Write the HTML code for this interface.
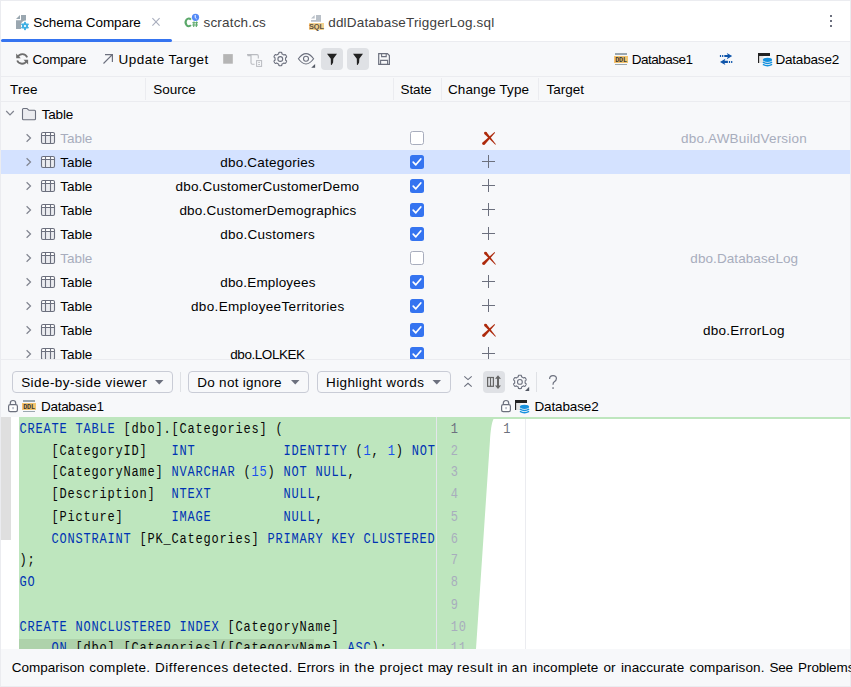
<!DOCTYPE html>
<html><head><meta charset="utf-8">
<style>
*{margin:0;padding:0;box-sizing:border-box}
html,body{width:851px;height:687px;overflow:hidden}
body{position:relative;background:#f7f8fa;font-family:"Liberation Sans",sans-serif;font-size:13.5px;color:#000}
.a{position:absolute}
.t{position:absolute;white-space:nowrap;line-height:16px;height:16px}
svg{position:absolute;overflow:visible}
.code{position:absolute;font-family:"Liberation Mono",monospace;font-size:12px;letter-spacing:0.8px;white-space:pre;line-height:17.742px;color:#080808;transform:scaleY(1.24);transform-origin:0 0}
.k{color:#0033b3}
.n{color:#1750eb}
.ln{position:absolute;font-family:"Liberation Mono",monospace;font-size:12px;letter-spacing:0.8px;line-height:17.742px;color:#a8adbd;white-space:pre;transform:scaleY(1.24);transform-origin:0 0}
.dd{position:absolute;top:371px;height:22px;border:1px solid #c9ccd6;border-radius:4px}
</style></head><body>

<div class="a" style="left:0px;top:0px;width:851px;height:1px;background:#ebecf0"></div>
<div class="a" style="left:0px;top:0px;width:1px;height:687px;background:#ebecf0"></div>
<div class="a" style="left:850px;top:0px;width:1px;height:687px;background:#ebecf0"></div>
<div class="a" style="left:0px;top:686px;width:851px;height:1px;background:#ebecf0"></div>
<div class="a" style="left:1px;top:1px;width:849px;height:40px;background:#fff"></div>
<div class="a" style="left:1px;top:41px;width:849px;height:1px;background:#ebecf0"></div>
<div class="a" style="left:1px;top:39px;width:171px;height:3px;background:#3574f0;border-radius:1.5px"></div>
<div class="t" style="left:33.30px;top:14.82px;letter-spacing:-0.100px">Schema Compare</div>
<div class="t" style="left:203.50px;top:14.82px;letter-spacing:0.178px;color:#404040">scratch.cs</div>
<div class="t" style="left:328.20px;top:14.82px;letter-spacing:0.183px;color:#404040">ddlDatabaseTriggerLog.sql</div>
<svg style="left:0;top:0" width="851" height="687"><path d="M16,19 L20,15 L20,19 Z" fill="#9aa7b0"/><path d="M21,15 L26,15 L26,20.5 A5,5 0 0 0 21,24 L21,29 L16,29 L16,20.3 L21,20.3 Z" fill="#9aa7b0"/></svg>
<svg style="left:0;top:0" width="851" height="687"><path d="M25.00,21.85 L25.22,21.86 L25.43,21.87 L25.65,21.90 L25.84,22.05 L25.93,22.55 L25.96,23.04 L26.08,23.20 L26.22,23.26 L26.36,23.33 L26.50,23.40 L26.63,23.48 L26.76,23.57 L26.89,23.67 L27.08,23.69 L27.53,23.47 L28.00,23.30 L28.23,23.39 L28.36,23.56 L28.48,23.74 L28.59,23.93 L28.70,24.12 L28.79,24.31 L28.87,24.51 L28.84,24.75 L28.45,25.07 L28.04,25.35 L27.96,25.53 L27.98,25.69 L28.00,25.84 L28.00,26.00 L28.00,26.16 L27.98,26.31 L27.96,26.47 L28.04,26.65 L28.45,26.93 L28.84,27.25 L28.87,27.49 L28.79,27.69 L28.70,27.88 L28.59,28.07 L28.48,28.26 L28.36,28.44 L28.23,28.61 L28.00,28.70 L27.53,28.53 L27.08,28.31 L26.89,28.33 L26.76,28.43 L26.63,28.52 L26.50,28.60 L26.36,28.67 L26.22,28.74 L26.08,28.80 L25.96,28.96 L25.93,29.45 L25.84,29.95 L25.65,30.10 L25.43,30.13 L25.22,30.14 L25.00,30.15 L24.78,30.14 L24.57,30.13 L24.35,30.10 L24.16,29.95 L24.07,29.45 L24.04,28.96 L23.92,28.80 L23.78,28.74 L23.64,28.67 L23.50,28.60 L23.37,28.52 L23.24,28.43 L23.11,28.33 L22.92,28.31 L22.47,28.53 L22.00,28.70 L21.77,28.61 L21.64,28.44 L21.52,28.26 L21.41,28.08 L21.30,27.88 L21.21,27.69 L21.13,27.49 L21.16,27.25 L21.55,26.93 L21.96,26.65 L22.04,26.47 L22.02,26.31 L22.00,26.16 L22.00,26.00 L22.00,25.84 L22.02,25.69 L22.04,25.53 L21.96,25.35 L21.55,25.07 L21.16,24.75 L21.13,24.51 L21.21,24.31 L21.30,24.12 L21.41,23.93 L21.52,23.74 L21.64,23.56 L21.77,23.39 L22.00,23.30 L22.47,23.47 L22.92,23.69 L23.11,23.67 L23.24,23.57 L23.37,23.48 L23.50,23.40 L23.64,23.33 L23.78,23.26 L23.92,23.20 L24.04,23.04 L24.07,22.55 L24.16,22.05 L24.35,21.90 L24.57,21.87 L24.78,21.86 L25.00,21.85Z M26.1,26 A1.1,1.1 0 1 0 23.9,26 A1.1,1.1 0 1 0 26.1,26Z" fill="#3fb0e4" fill-rule="evenodd"/></svg>
<svg style="left:0;top:0" width="851" height="687"><path d="M190.9,19.6 A3.1,3.9 0 1 0 190.9,25.2" fill="none" stroke="#5ba86a" stroke-width="2"/><path d="M194,21.5 L193.7,27 M196.6,21.5 L196.3,27 M192.3,22.8 L198,22.8 M192.3,25 L198,25" stroke="#5ba86a" stroke-width="1.1"/><circle cx="195.5" cy="17.3" r="3.6" fill="#548af7"/><path d="M195.2,15 L195.2,17.6 L196.6,18.9" fill="none" stroke="#fff" stroke-width="1"/></svg>
<svg style="left:0;top:0" width="851" height="687"><path d="M311,18.5 L314.7,15 L314.7,18.5 Z" fill="#b9c0c8"/><path d="M316,15 L321,15 L321,21.7 L311,21.7 L311,20 L316,20 Z" fill="#b9c0c8"/><rect x="309" y="23" width="15" height="7" fill="#f4d28f"/><text x="316.5" y="29.2" font-family="Liberation Sans" font-weight="bold" font-size="7.4" fill="#5a5040" text-anchor="middle">SQL</text></svg>
<svg style="left:0;top:0" width="851" height="687"><rect x="830" y="15" width="2" height="2" fill="#6c707e"/><rect x="830" y="20" width="2" height="2" fill="#6c707e"/><rect x="830" y="25" width="2" height="2" fill="#6c707e"/></svg>
<svg style="left:0;top:0" width="851" height="687"><path d="M152.4,18.2 L159.6,25.6 M159.6,18.2 L152.4,25.6" stroke="#a8adbd" stroke-width="1.1"/></svg>
<div class="a" style="left:1px;top:76px;width:849px;height:1px;background:#ebecf0"></div>
<div class="t" style="left:32.60px;top:51.82px;letter-spacing:-0.250px">Compare</div>
<div class="t" style="left:118.60px;top:51.82px;letter-spacing:0.425px">Update Target</div>
<div class="a" style="left:321px;top:48px;width:22px;height:22px;background:#dfe1e5;border-radius:4px"></div>
<div class="a" style="left:347px;top:48px;width:22px;height:22px;background:#dfe1e5;border-radius:4px"></div>
<div class="t" style="left:631.80px;top:51.82px;letter-spacing:-0.512px">Database1</div>
<div class="t" style="left:775.40px;top:51.82px;letter-spacing:-0.175px">Database2</div>
<svg style="left:0;top:0" width="851" height="687"><path d="M17.6,57.2 A5.2,5.2 0 0 1 27.2,57.3" fill="none" stroke="#6e6e6e" stroke-width="1.8"/><path d="M16.2,53.4 L16.2,58.2 L20.8,58.2 Z" fill="#6e6e6e"/><path d="M26.8,60.6 A5.2,5.2 0 0 1 17.2,60.5" fill="none" stroke="#6e6e6e" stroke-width="1.8"/><path d="M28.1,64.6 L28.1,59.8 L23.5,59.8 Z" fill="#6e6e6e"/><path d="M103.5,63.5 L112.3,54.7 M105,54.6 L112.4,54.6 L112.4,62" fill="none" stroke="#6c707e" stroke-width="1.2"/><rect x="223.2" y="54.1" width="9.6" height="9.6" fill="#b5b5b5"/><path d="M247.6,55.6 L247.6,54.6 L257,54.6 Q258.3,54.6 258.3,56 L258.3,58.5 M251,54.6 L251,62.8 Q251,64.2 252.4,64.2 L254.6,64.2 M247.6,55.6 L251,55.6" fill="none" stroke="#b9bbc0" stroke-width="1.1"/><rect x="256.6" y="60.6" width="5" height="5.8" fill="none" stroke="#b9bbc0" stroke-width="1"/><path d="M258.2,62.4 L260,62.4 M258.2,64.5 L260,64.5" stroke="#b9bbc0" stroke-width="0.9"/><path d="M298.4,58.8 Q306,48.4 313.6,58.8 Q306,69.2 298.4,58.8 Z" fill="none" stroke="#6c707e" stroke-width="1.1"/><circle cx="306" cy="58.8" r="2.5" fill="none" stroke="#6c707e" stroke-width="1.1"/><path d="M311.2,67.7 L315.1,63.9 L315.1,67.7 Z" fill="#555a66"/><path d="M327,53.8 L337,53.8 L333.3,58.8 L333.1,62.4 L331.7,65.1 L330.9,64.8 L330.8,58.8 Z" fill="#222"/><path d="M353,53.8 L363,53.8 L359.3,58.8 L359.1,62.4 L357.7,65.1 L356.9,64.8 L356.8,58.8 Z" fill="#222"/><path d="M378.7,53.6 L387.4,53.6 L389.4,55.6 L389.4,64.4 L378.7,64.4 Z" fill="none" stroke="#6c707e" stroke-width="1.2"/><path d="M381.6,53.6 L381.6,56.6 L386.2,56.6 L386.2,53.6" fill="none" stroke="#6c707e" stroke-width="1.1"/><path d="M380.6,64.4 L380.6,60.4 L387.6,60.4 L387.6,64.4" fill="none" stroke="#6c707e" stroke-width="1.1"/><path d="M719.9,55.1 h1.2 v2 h-1.2 Z M722.1,55.1 h1.2 v2 h-1.2 Z M724.3,55 L729,55 L729,57.1 L724.3,57.1 Z M726.8,52.9 L732.2,56 L726.8,59.2 L728.2,56 Z" fill="#0d54aa"/><path d="M732.3,60.9 h-1.2 v2 h1.2 Z M730.1,60.9 h-1.2 v2 h1.2 Z M727.9,60.8 L723.2,60.8 L723.2,62.9 L727.9,62.9 Z M725.4,58.7 L720,61.9 L725.4,65.1 L724,61.9 Z" fill="#0d54aa"/></svg>
<svg style="left:0;top:0" width="851" height="687"><path d="M280.30,52.30 L280.48,52.30 L280.65,52.31 L280.83,52.32 L281.00,52.34 L281.17,52.36 L281.35,52.38 L281.52,52.41 L281.69,52.46 L281.80,52.74 L281.85,53.20 L281.88,53.67 L281.94,53.95 L282.07,54.00 L282.20,54.05 L282.33,54.10 L282.46,54.16 L282.58,54.22 L282.71,54.28 L282.83,54.34 L282.95,54.41 L283.07,54.48 L283.19,54.56 L283.30,54.63 L283.42,54.71 L283.53,54.80 L283.64,54.88 L283.74,54.97 L283.86,55.05 L284.13,54.97 L284.54,54.76 L284.97,54.57 L285.27,54.53 L285.39,54.65 L285.51,54.78 L285.62,54.92 L285.72,55.06 L285.82,55.21 L285.92,55.35 L286.01,55.50 L286.10,55.65 L286.19,55.80 L286.27,55.96 L286.35,56.12 L286.42,56.27 L286.49,56.44 L286.55,56.60 L286.62,56.76 L286.66,56.93 L286.47,57.17 L286.10,57.45 L285.71,57.70 L285.50,57.90 L285.51,58.03 L285.53,58.17 L285.55,58.31 L285.57,58.45 L285.58,58.58 L285.59,58.72 L285.60,58.86 L285.60,59.00 L285.60,59.14 L285.59,59.28 L285.58,59.42 L285.57,59.55 L285.55,59.69 L285.53,59.83 L285.51,59.97 L285.50,60.10 L285.71,60.30 L286.10,60.55 L286.47,60.83 L286.66,61.07 L286.62,61.24 L286.55,61.40 L286.49,61.56 L286.42,61.73 L286.35,61.88 L286.27,62.04 L286.19,62.20 L286.10,62.35 L286.01,62.50 L285.92,62.65 L285.82,62.79 L285.72,62.94 L285.62,63.08 L285.51,63.22 L285.39,63.35 L285.27,63.47 L284.97,63.43 L284.54,63.24 L284.13,63.03 L283.86,62.95 L283.74,63.03 L283.64,63.12 L283.53,63.20 L283.42,63.29 L283.30,63.37 L283.19,63.44 L283.07,63.52 L282.95,63.59 L282.83,63.66 L282.71,63.72 L282.58,63.78 L282.46,63.84 L282.33,63.90 L282.20,63.95 L282.07,64.00 L281.94,64.05 L281.88,64.33 L281.85,64.80 L281.80,65.26 L281.69,65.54 L281.52,65.59 L281.35,65.62 L281.17,65.64 L281.00,65.66 L280.83,65.68 L280.65,65.69 L280.48,65.70 L280.30,65.70 L280.12,65.70 L279.95,65.69 L279.77,65.68 L279.60,65.66 L279.43,65.64 L279.25,65.62 L279.08,65.59 L278.91,65.54 L278.80,65.26 L278.75,64.80 L278.72,64.33 L278.66,64.05 L278.53,64.00 L278.40,63.95 L278.27,63.90 L278.14,63.84 L278.02,63.78 L277.89,63.72 L277.77,63.66 L277.65,63.59 L277.53,63.52 L277.41,63.44 L277.30,63.37 L277.18,63.29 L277.07,63.20 L276.96,63.12 L276.86,63.03 L276.74,62.95 L276.47,63.03 L276.06,63.24 L275.63,63.43 L275.33,63.47 L275.21,63.35 L275.09,63.22 L274.98,63.08 L274.88,62.94 L274.78,62.79 L274.68,62.65 L274.59,62.50 L274.50,62.35 L274.41,62.20 L274.33,62.04 L274.25,61.88 L274.18,61.73 L274.11,61.56 L274.05,61.40 L273.98,61.24 L273.94,61.07 L274.13,60.83 L274.50,60.55 L274.89,60.30 L275.10,60.10 L275.09,59.97 L275.07,59.83 L275.05,59.69 L275.03,59.55 L275.02,59.42 L275.01,59.28 L275.00,59.14 L275.00,59.00 L275.00,58.86 L275.01,58.72 L275.02,58.58 L275.03,58.45 L275.05,58.31 L275.07,58.17 L275.09,58.03 L275.10,57.90 L274.89,57.70 L274.50,57.45 L274.13,57.17 L273.94,56.93 L273.98,56.76 L274.05,56.60 L274.11,56.44 L274.18,56.27 L274.25,56.12 L274.33,55.96 L274.41,55.80 L274.50,55.65 L274.59,55.50 L274.68,55.35 L274.78,55.21 L274.88,55.06 L274.98,54.92 L275.09,54.78 L275.21,54.65 L275.33,54.53 L275.63,54.57 L276.06,54.76 L276.47,54.97 L276.74,55.05 L276.86,54.97 L276.96,54.88 L277.07,54.80 L277.18,54.71 L277.30,54.63 L277.41,54.56 L277.53,54.48 L277.65,54.41 L277.77,54.34 L277.89,54.28 L278.02,54.22 L278.14,54.16 L278.27,54.10 L278.40,54.05 L278.53,54.00 L278.66,53.95 L278.72,53.67 L278.75,53.20 L278.80,52.74 L278.91,52.46 L279.08,52.41 L279.25,52.38 L279.43,52.36 L279.60,52.34 L279.77,52.32 L279.95,52.31 L280.12,52.30 L280.30,52.30Z" fill="none" stroke="#6c707e" stroke-width="1.1" stroke-linejoin="round"/><circle cx="280.3" cy="59" r="2.4" fill="none" stroke="#6c707e" stroke-width="1.1"/></svg>
<svg style="left:614px;top:53px" width="14" height="13" viewBox="614 53 14 13"><rect x="615" y="53" width="12" height="2" fill="#9aa7b0"/><rect x="614" y="56" width="14" height="7" fill="#f4c570"/><rect x="615" y="64" width="12" height="1" fill="#9aa7b0"/><text x="621" y="62" font-family="Liberation Mono" font-weight="bold" font-size="6.8" fill="#3b3a36" text-anchor="middle" letter-spacing="-0.2">DDL</text></svg>
<svg style="left:758px;top:53px" width="15" height="14" viewBox="758 53 15 14"><rect x="758" y="53" width="12" height="3" fill="#222"/><rect x="758" y="53" width="1.4" height="10" fill="#222"/><rect x="759.4" y="56" width="4" height="7" fill="#e4e4e4"/><ellipse cx="767.5" cy="59.8" rx="4.6" ry="2.1" fill="#1591de"/><path d="M762.9,62.2 Q767.5,64.8 772.1,62.2 M762.9,64.4 Q767.5,67 772.1,64.4" stroke="#1591de" stroke-width="1.4" fill="none"/></svg>
<div class="a" style="left:1px;top:101px;width:849px;height:1px;background:#ebecf0"></div>
<div class="a" style="left:145px;top:78px;width:1px;height:22px;background:#ebecf0"></div>
<div class="a" style="left:393px;top:78px;width:1px;height:22px;background:#ebecf0"></div>
<div class="a" style="left:441px;top:78px;width:1px;height:22px;background:#ebecf0"></div>
<div class="a" style="left:538px;top:78px;width:1px;height:22px;background:#ebecf0"></div>
<div class="t" style="left:10.10px;top:81.82px;letter-spacing:0.067px">Tree</div>
<div class="t" style="left:153.30px;top:81.82px;letter-spacing:-0.060px">Source</div>
<div class="t" style="left:400.50px;top:81.82px;letter-spacing:-0.125px">State</div>
<div class="t" style="left:448.00px;top:81.82px;letter-spacing:0.100px">Change Type</div>
<div class="t" style="left:546.60px;top:81.82px">Target</div>
<div class="a" style="left:0;top:0;width:851px;height:359px;overflow:hidden">
<svg style="left:5px;top:109px" width="10" height="8" viewBox="0 0 10 8"><path d="M1.2,2 L5,5.8 L8.8,2" fill="none" stroke="#80848f" stroke-width="1.2"/></svg>
<svg style="left:21px;top:107px" width="16" height="14" viewBox="0 0 16 14"><path d="M1.5,2.5 Q1.5,1.5 2.5,1.5 L6,1.5 L8,3.3 L13.5,3.3 Q14.5,3.3 14.5,4.3 L14.5,11.7 Q14.5,12.7 13.5,12.7 L2.5,12.7 Q1.5,12.7 1.5,11.7 Z" fill="#ebecf0" stroke="#6c707e" stroke-width="1.1"/></svg>
<div class="t" style="left:41.70px;top:106.82px;letter-spacing:-0.175px">Table</div>
<svg style="left:24px;top:133px" width="8" height="10" viewBox="0 0 8 10"><path d="M2.6,1.3 L6.5,5 L2.6,8.7" fill="none" stroke="#80848f" stroke-width="1.2"/></svg>
<svg style="left:40px;top:131px" width="16" height="14" viewBox="0 0 16 14"><rect x="1.5" y="1.5" width="13" height="11" rx="1.5" fill="#ebecf0"/><rect x="2" y="2" width="12" height="3" fill="#fff"/><path d="M1.5,4.5 L14.5,4.5 M5.5,1.5 L5.5,12.5 M10.5,1.5 L10.5,12.5" stroke="#6c707e" stroke-width="1.1"/><rect x="1.5" y="1.5" width="13" height="11" rx="1.5" fill="none" stroke="#6c707e" stroke-width="1.1"/></svg>
<div class="t" style="left:60.30px;top:130.82px;letter-spacing:-0.050px;color:#a8adbd">Table</div>
<div class="t" style="left:681.00px;top:130.82px;letter-spacing:0.182px;color:#a8adbd">dbo.AWBuildVersion</div>
<svg style="left:410px;top:131px" width="14" height="14" viewBox="0 0 14 14"><rect x="0.5" y="0.5" width="13" height="13" rx="2" fill="#fff" stroke="#a8adbd" stroke-width="1"/></svg>
<svg style="left:481px;top:131px" width="16" height="16" viewBox="0 0 16 16"><g fill="#ad2a0c"><path d="M3.39,2.89 L14.34,13.83 L14.86,13.37 L5.41,1.11Z"/><circle cx="4.399999999999977" cy="2" r="1.35"/><path d="M3.63,13.63 L14.08,1.68 L13.52,1.12 L1.57,11.57Z"/><circle cx="2.6000000000000227" cy="12.599999999999994" r="1.45"/></g></svg>
<div class="a" style="left:1px;top:150px;width:849px;height:24px;background:#d4e2ff"></div>
<svg style="left:24px;top:157px" width="8" height="10" viewBox="0 0 8 10"><path d="M2.6,1.3 L6.5,5 L2.6,8.7" fill="none" stroke="#80848f" stroke-width="1.2"/></svg>
<svg style="left:40px;top:155px" width="16" height="14" viewBox="0 0 16 14"><rect x="1.5" y="1.5" width="13" height="11" rx="1.5" fill="#ebecf0"/><rect x="2" y="2" width="12" height="3" fill="#fff"/><path d="M1.5,4.5 L14.5,4.5 M5.5,1.5 L5.5,12.5 M10.5,1.5 L10.5,12.5" stroke="#6c707e" stroke-width="1.1"/><rect x="1.5" y="1.5" width="13" height="11" rx="1.5" fill="none" stroke="#6c707e" stroke-width="1.1"/></svg>
<div class="t" style="left:60.30px;top:154.82px;letter-spacing:-0.050px">Table</div>
<div class="t" style="left:220.20px;top:154.82px;letter-spacing:0.223px">dbo.Categories</div>
<svg style="left:410px;top:155px" width="14" height="14" viewBox="0 0 14 14"><rect x="0" y="0" width="14" height="14" rx="2.5" fill="#3574f0"/><path d="M3.2,7.2 L5.8,9.8 L10.8,4" fill="none" stroke="#fff" stroke-width="1.7" stroke-linecap="round" stroke-linejoin="round"/></svg>
<svg style="left:482px;top:155px" width="14" height="14" viewBox="0 0 14 14"><path d="M6.5,0 L6.5,13 M0,6.5 L13,6.5" stroke="#6c707e" stroke-width="1"/></svg>
<svg style="left:24px;top:181px" width="8" height="10" viewBox="0 0 8 10"><path d="M2.6,1.3 L6.5,5 L2.6,8.7" fill="none" stroke="#80848f" stroke-width="1.2"/></svg>
<svg style="left:40px;top:179px" width="16" height="14" viewBox="0 0 16 14"><rect x="1.5" y="1.5" width="13" height="11" rx="1.5" fill="#ebecf0"/><rect x="2" y="2" width="12" height="3" fill="#fff"/><path d="M1.5,4.5 L14.5,4.5 M5.5,1.5 L5.5,12.5 M10.5,1.5 L10.5,12.5" stroke="#6c707e" stroke-width="1.1"/><rect x="1.5" y="1.5" width="13" height="11" rx="1.5" fill="none" stroke="#6c707e" stroke-width="1.1"/></svg>
<div class="t" style="left:60.30px;top:178.82px;letter-spacing:-0.050px">Table</div>
<div class="t" style="left:175.50px;top:178.82px;letter-spacing:0.187px">dbo.CustomerCustomerDemo</div>
<svg style="left:410px;top:179px" width="14" height="14" viewBox="0 0 14 14"><rect x="0" y="0" width="14" height="14" rx="2.5" fill="#3574f0"/><path d="M3.2,7.2 L5.8,9.8 L10.8,4" fill="none" stroke="#fff" stroke-width="1.7" stroke-linecap="round" stroke-linejoin="round"/></svg>
<svg style="left:482px;top:179px" width="14" height="14" viewBox="0 0 14 14"><path d="M6.5,0 L6.5,13 M0,6.5 L13,6.5" stroke="#6c707e" stroke-width="1"/></svg>
<svg style="left:24px;top:205px" width="8" height="10" viewBox="0 0 8 10"><path d="M2.6,1.3 L6.5,5 L2.6,8.7" fill="none" stroke="#80848f" stroke-width="1.2"/></svg>
<svg style="left:40px;top:203px" width="16" height="14" viewBox="0 0 16 14"><rect x="1.5" y="1.5" width="13" height="11" rx="1.5" fill="#ebecf0"/><rect x="2" y="2" width="12" height="3" fill="#fff"/><path d="M1.5,4.5 L14.5,4.5 M5.5,1.5 L5.5,12.5 M10.5,1.5 L10.5,12.5" stroke="#6c707e" stroke-width="1.1"/><rect x="1.5" y="1.5" width="13" height="11" rx="1.5" fill="none" stroke="#6c707e" stroke-width="1.1"/></svg>
<div class="t" style="left:60.30px;top:202.82px;letter-spacing:-0.050px">Table</div>
<div class="t" style="left:179.40px;top:202.82px;letter-spacing:0.222px">dbo.CustomerDemographics</div>
<svg style="left:410px;top:203px" width="14" height="14" viewBox="0 0 14 14"><rect x="0" y="0" width="14" height="14" rx="2.5" fill="#3574f0"/><path d="M3.2,7.2 L5.8,9.8 L10.8,4" fill="none" stroke="#fff" stroke-width="1.7" stroke-linecap="round" stroke-linejoin="round"/></svg>
<svg style="left:482px;top:203px" width="14" height="14" viewBox="0 0 14 14"><path d="M6.5,0 L6.5,13 M0,6.5 L13,6.5" stroke="#6c707e" stroke-width="1"/></svg>
<svg style="left:24px;top:229px" width="8" height="10" viewBox="0 0 8 10"><path d="M2.6,1.3 L6.5,5 L2.6,8.7" fill="none" stroke="#80848f" stroke-width="1.2"/></svg>
<svg style="left:40px;top:227px" width="16" height="14" viewBox="0 0 16 14"><rect x="1.5" y="1.5" width="13" height="11" rx="1.5" fill="#ebecf0"/><rect x="2" y="2" width="12" height="3" fill="#fff"/><path d="M1.5,4.5 L14.5,4.5 M5.5,1.5 L5.5,12.5 M10.5,1.5 L10.5,12.5" stroke="#6c707e" stroke-width="1.1"/><rect x="1.5" y="1.5" width="13" height="11" rx="1.5" fill="none" stroke="#6c707e" stroke-width="1.1"/></svg>
<div class="t" style="left:60.30px;top:226.82px;letter-spacing:-0.050px">Table</div>
<div class="t" style="left:220.20px;top:226.82px;letter-spacing:0.242px">dbo.Customers</div>
<svg style="left:410px;top:227px" width="14" height="14" viewBox="0 0 14 14"><rect x="0" y="0" width="14" height="14" rx="2.5" fill="#3574f0"/><path d="M3.2,7.2 L5.8,9.8 L10.8,4" fill="none" stroke="#fff" stroke-width="1.7" stroke-linecap="round" stroke-linejoin="round"/></svg>
<svg style="left:482px;top:227px" width="14" height="14" viewBox="0 0 14 14"><path d="M6.5,0 L6.5,13 M0,6.5 L13,6.5" stroke="#6c707e" stroke-width="1"/></svg>
<svg style="left:24px;top:253px" width="8" height="10" viewBox="0 0 8 10"><path d="M2.6,1.3 L6.5,5 L2.6,8.7" fill="none" stroke="#80848f" stroke-width="1.2"/></svg>
<svg style="left:40px;top:251px" width="16" height="14" viewBox="0 0 16 14"><rect x="1.5" y="1.5" width="13" height="11" rx="1.5" fill="#ebecf0"/><rect x="2" y="2" width="12" height="3" fill="#fff"/><path d="M1.5,4.5 L14.5,4.5 M5.5,1.5 L5.5,12.5 M10.5,1.5 L10.5,12.5" stroke="#6c707e" stroke-width="1.1"/><rect x="1.5" y="1.5" width="13" height="11" rx="1.5" fill="none" stroke="#6c707e" stroke-width="1.1"/></svg>
<div class="t" style="left:60.30px;top:250.82px;letter-spacing:-0.050px;color:#a8adbd">Table</div>
<div class="t" style="left:690.30px;top:250.82px;letter-spacing:0.086px;color:#a8adbd">dbo.DatabaseLog</div>
<svg style="left:410px;top:251px" width="14" height="14" viewBox="0 0 14 14"><rect x="0.5" y="0.5" width="13" height="13" rx="2" fill="#fff" stroke="#a8adbd" stroke-width="1"/></svg>
<svg style="left:481px;top:251px" width="16" height="16" viewBox="0 0 16 16"><g fill="#ad2a0c"><path d="M3.39,2.89 L14.34,13.83 L14.86,13.37 L5.41,1.11Z"/><circle cx="4.399999999999977" cy="2" r="1.35"/><path d="M3.63,13.63 L14.08,1.68 L13.52,1.12 L1.57,11.57Z"/><circle cx="2.6000000000000227" cy="12.599999999999994" r="1.45"/></g></svg>
<svg style="left:24px;top:277px" width="8" height="10" viewBox="0 0 8 10"><path d="M2.6,1.3 L6.5,5 L2.6,8.7" fill="none" stroke="#80848f" stroke-width="1.2"/></svg>
<svg style="left:40px;top:275px" width="16" height="14" viewBox="0 0 16 14"><rect x="1.5" y="1.5" width="13" height="11" rx="1.5" fill="#ebecf0"/><rect x="2" y="2" width="12" height="3" fill="#fff"/><path d="M1.5,4.5 L14.5,4.5 M5.5,1.5 L5.5,12.5 M10.5,1.5 L10.5,12.5" stroke="#6c707e" stroke-width="1.1"/><rect x="1.5" y="1.5" width="13" height="11" rx="1.5" fill="none" stroke="#6c707e" stroke-width="1.1"/></svg>
<div class="t" style="left:60.30px;top:274.82px;letter-spacing:-0.050px">Table</div>
<div class="t" style="left:220.20px;top:274.82px;letter-spacing:0.183px">dbo.Employees</div>
<svg style="left:410px;top:275px" width="14" height="14" viewBox="0 0 14 14"><rect x="0" y="0" width="14" height="14" rx="2.5" fill="#3574f0"/><path d="M3.2,7.2 L5.8,9.8 L10.8,4" fill="none" stroke="#fff" stroke-width="1.7" stroke-linecap="round" stroke-linejoin="round"/></svg>
<svg style="left:482px;top:275px" width="14" height="14" viewBox="0 0 14 14"><path d="M6.5,0 L6.5,13 M0,6.5 L13,6.5" stroke="#6c707e" stroke-width="1"/></svg>
<svg style="left:24px;top:301px" width="8" height="10" viewBox="0 0 8 10"><path d="M2.6,1.3 L6.5,5 L2.6,8.7" fill="none" stroke="#80848f" stroke-width="1.2"/></svg>
<svg style="left:40px;top:299px" width="16" height="14" viewBox="0 0 16 14"><rect x="1.5" y="1.5" width="13" height="11" rx="1.5" fill="#ebecf0"/><rect x="2" y="2" width="12" height="3" fill="#fff"/><path d="M1.5,4.5 L14.5,4.5 M5.5,1.5 L5.5,12.5 M10.5,1.5 L10.5,12.5" stroke="#6c707e" stroke-width="1.1"/><rect x="1.5" y="1.5" width="13" height="11" rx="1.5" fill="none" stroke="#6c707e" stroke-width="1.1"/></svg>
<div class="t" style="left:60.30px;top:298.82px;letter-spacing:-0.050px">Table</div>
<div class="t" style="left:191.00px;top:298.82px;letter-spacing:0.345px">dbo.EmployeeTerritories</div>
<svg style="left:410px;top:299px" width="14" height="14" viewBox="0 0 14 14"><rect x="0" y="0" width="14" height="14" rx="2.5" fill="#3574f0"/><path d="M3.2,7.2 L5.8,9.8 L10.8,4" fill="none" stroke="#fff" stroke-width="1.7" stroke-linecap="round" stroke-linejoin="round"/></svg>
<svg style="left:482px;top:299px" width="14" height="14" viewBox="0 0 14 14"><path d="M6.5,0 L6.5,13 M0,6.5 L13,6.5" stroke="#6c707e" stroke-width="1"/></svg>
<svg style="left:24px;top:325px" width="8" height="10" viewBox="0 0 8 10"><path d="M2.6,1.3 L6.5,5 L2.6,8.7" fill="none" stroke="#80848f" stroke-width="1.2"/></svg>
<svg style="left:40px;top:323px" width="16" height="14" viewBox="0 0 16 14"><rect x="1.5" y="1.5" width="13" height="11" rx="1.5" fill="#ebecf0"/><rect x="2" y="2" width="12" height="3" fill="#fff"/><path d="M1.5,4.5 L14.5,4.5 M5.5,1.5 L5.5,12.5 M10.5,1.5 L10.5,12.5" stroke="#6c707e" stroke-width="1.1"/><rect x="1.5" y="1.5" width="13" height="11" rx="1.5" fill="none" stroke="#6c707e" stroke-width="1.1"/></svg>
<div class="t" style="left:60.30px;top:322.82px;letter-spacing:-0.050px">Table</div>
<div class="t" style="left:703.10px;top:322.82px;letter-spacing:0.236px">dbo.ErrorLog</div>
<svg style="left:410px;top:323px" width="14" height="14" viewBox="0 0 14 14"><rect x="0" y="0" width="14" height="14" rx="2.5" fill="#3574f0"/><path d="M3.2,7.2 L5.8,9.8 L10.8,4" fill="none" stroke="#fff" stroke-width="1.7" stroke-linecap="round" stroke-linejoin="round"/></svg>
<svg style="left:481px;top:323px" width="16" height="16" viewBox="0 0 16 16"><g fill="#ad2a0c"><path d="M3.39,2.89 L14.34,13.83 L14.86,13.37 L5.41,1.11Z"/><circle cx="4.399999999999977" cy="2" r="1.35"/><path d="M3.63,13.63 L14.08,1.68 L13.52,1.12 L1.57,11.57Z"/><circle cx="2.6000000000000227" cy="12.599999999999994" r="1.45"/></g></svg>
<svg style="left:24px;top:349px" width="8" height="10" viewBox="0 0 8 10"><path d="M2.6,1.3 L6.5,5 L2.6,8.7" fill="none" stroke="#80848f" stroke-width="1.2"/></svg>
<svg style="left:40px;top:347px" width="16" height="14" viewBox="0 0 16 14"><rect x="1.5" y="1.5" width="13" height="11" rx="1.5" fill="#ebecf0"/><rect x="2" y="2" width="12" height="3" fill="#fff"/><path d="M1.5,4.5 L14.5,4.5 M5.5,1.5 L5.5,12.5 M10.5,1.5 L10.5,12.5" stroke="#6c707e" stroke-width="1.1"/><rect x="1.5" y="1.5" width="13" height="11" rx="1.5" fill="none" stroke="#6c707e" stroke-width="1.1"/></svg>
<div class="t" style="left:60.30px;top:346.82px;letter-spacing:-0.050px">Table</div>
<div class="t" style="left:230.30px;top:346.82px;letter-spacing:-0.444px">dbo.LOLKEK</div>
<svg style="left:410px;top:347px" width="14" height="14" viewBox="0 0 14 14"><rect x="0" y="0" width="14" height="14" rx="2.5" fill="#3574f0"/><path d="M3.2,7.2 L5.8,9.8 L10.8,4" fill="none" stroke="#fff" stroke-width="1.7" stroke-linecap="round" stroke-linejoin="round"/></svg>
<svg style="left:482px;top:347px" width="14" height="14" viewBox="0 0 14 14"><path d="M6.5,0 L6.5,13 M0,6.5 L13,6.5" stroke="#6c707e" stroke-width="1"/></svg>
</div>
<div class="a" style="left:1px;top:359px;width:849px;height:1px;background:#ebecf0"></div>
<div class="dd" style="left:12px;width:161px"></div>
<div class="t" style="left:21.20px;top:374.82px;letter-spacing:0.428px">Side-by-side viewer</div>
<div class="a" style="left:180px;top:372px;width:1px;height:20px;background:#dfe1e5"></div>
<div class="dd" style="left:188px;width:121px"></div>
<div class="t" style="left:197.30px;top:374.82px;letter-spacing:0.267px">Do not ignore</div>
<div class="dd" style="left:317px;width:134px"></div>
<div class="t" style="left:326.00px;top:374.82px;letter-spacing:0.400px">Highlight words</div>
<div class="a" style="left:483px;top:371px;width:22px;height:22px;background:#dfe1e5;border-radius:4px"></div>
<div class="a" style="left:536px;top:372px;width:1px;height:20px;background:#dfe1e5"></div>
<svg style="left:0;top:0" width="851" height="687"><path d="M155,380 L163.5,380 L159.25,384.6 Z" fill="#6c707e"/><path d="M291,380 L299.5,380 L295.25,384.6 Z" fill="#6c707e"/><path d="M432.5,380 L441,380 L436.75,384.6 Z" fill="#6c707e"/><path d="M464.3,376.3 L468,379.6 L471.7,376.3 M464.3,386.6 L468,383.3 L471.7,386.6" fill="none" stroke="#6c707e" stroke-width="1.1"/><rect x="487.6" y="377.5" width="5.8" height="8.8" fill="none" stroke="#666" stroke-width="1.2"/><path d="M490.5,377.5 L490.5,386.3" stroke="#666" stroke-width="1.1"/><path d="M498,377 L498,387" stroke="#666" stroke-width="2"/><path d="M495,378.8 L498,375.2 L501,378.8 Z M495,385.4 L498,389 L501,385.4 Z" fill="#666"/><path d="M525,391 L529.2,386.8 L529.2,391 Z" fill="#555a66"/><path d="M549.6,379 Q549.6,375.6 553,375.6 Q556.4,375.6 556.4,378.6 Q556.4,380.6 554.3,381.8 Q553,382.6 553,384.8" fill="none" stroke="#6c707e" stroke-width="1.2"/><rect x="552.3" y="387.3" width="1.5" height="1.5" fill="#6c707e"/></svg>
<svg style="left:0;top:0" width="851" height="687"><path d="M519.90,375.20 L520.08,375.20 L520.25,375.21 L520.43,375.22 L520.60,375.24 L520.77,375.26 L520.95,375.28 L521.12,375.31 L521.29,375.36 L521.40,375.64 L521.45,376.10 L521.48,376.57 L521.54,376.85 L521.67,376.90 L521.80,376.95 L521.93,377.00 L522.06,377.06 L522.18,377.12 L522.31,377.18 L522.43,377.24 L522.55,377.31 L522.67,377.38 L522.79,377.46 L522.90,377.53 L523.02,377.61 L523.13,377.70 L523.24,377.78 L523.34,377.87 L523.46,377.95 L523.73,377.87 L524.14,377.66 L524.57,377.47 L524.87,377.43 L524.99,377.55 L525.11,377.68 L525.22,377.82 L525.32,377.96 L525.42,378.11 L525.52,378.25 L525.61,378.40 L525.70,378.55 L525.79,378.70 L525.87,378.86 L525.95,379.02 L526.02,379.17 L526.09,379.34 L526.15,379.50 L526.22,379.66 L526.26,379.83 L526.07,380.07 L525.70,380.35 L525.31,380.60 L525.10,380.80 L525.11,380.93 L525.13,381.07 L525.15,381.21 L525.17,381.35 L525.18,381.48 L525.19,381.62 L525.20,381.76 L525.20,381.90 L525.20,382.04 L525.19,382.18 L525.18,382.32 L525.17,382.45 L525.15,382.59 L525.13,382.73 L525.11,382.87 L525.10,383.00 L525.31,383.20 L525.70,383.45 L526.07,383.73 L526.26,383.97 L526.22,384.14 L526.15,384.30 L526.09,384.46 L526.02,384.63 L525.95,384.78 L525.87,384.94 L525.79,385.10 L525.70,385.25 L525.61,385.40 L525.52,385.55 L525.42,385.69 L525.32,385.84 L525.22,385.98 L525.11,386.12 L524.99,386.25 L524.87,386.37 L524.57,386.33 L524.14,386.14 L523.73,385.93 L523.46,385.85 L523.34,385.93 L523.24,386.02 L523.13,386.10 L523.02,386.19 L522.90,386.27 L522.79,386.34 L522.67,386.42 L522.55,386.49 L522.43,386.56 L522.31,386.62 L522.18,386.68 L522.06,386.74 L521.93,386.80 L521.80,386.85 L521.67,386.90 L521.54,386.95 L521.48,387.23 L521.45,387.70 L521.40,388.16 L521.29,388.44 L521.12,388.49 L520.95,388.52 L520.77,388.54 L520.60,388.56 L520.43,388.58 L520.25,388.59 L520.08,388.60 L519.90,388.60 L519.72,388.60 L519.55,388.59 L519.37,388.58 L519.20,388.56 L519.03,388.54 L518.85,388.52 L518.68,388.49 L518.51,388.44 L518.40,388.16 L518.35,387.70 L518.32,387.23 L518.26,386.95 L518.13,386.90 L518.00,386.85 L517.87,386.80 L517.74,386.74 L517.62,386.68 L517.49,386.62 L517.37,386.56 L517.25,386.49 L517.13,386.42 L517.01,386.34 L516.90,386.27 L516.78,386.19 L516.67,386.10 L516.56,386.02 L516.46,385.93 L516.34,385.85 L516.07,385.93 L515.66,386.14 L515.23,386.33 L514.93,386.37 L514.81,386.25 L514.69,386.12 L514.58,385.98 L514.48,385.84 L514.38,385.69 L514.28,385.55 L514.19,385.40 L514.10,385.25 L514.01,385.10 L513.93,384.94 L513.85,384.78 L513.78,384.63 L513.71,384.46 L513.65,384.30 L513.58,384.14 L513.54,383.97 L513.73,383.73 L514.10,383.45 L514.49,383.20 L514.70,383.00 L514.69,382.87 L514.67,382.73 L514.65,382.59 L514.63,382.45 L514.62,382.32 L514.61,382.18 L514.60,382.04 L514.60,381.90 L514.60,381.76 L514.61,381.62 L514.62,381.48 L514.63,381.35 L514.65,381.21 L514.67,381.07 L514.69,380.93 L514.70,380.80 L514.49,380.60 L514.10,380.35 L513.73,380.07 L513.54,379.83 L513.58,379.66 L513.65,379.50 L513.71,379.34 L513.78,379.17 L513.85,379.02 L513.93,378.86 L514.01,378.70 L514.10,378.55 L514.19,378.40 L514.28,378.25 L514.38,378.11 L514.48,377.96 L514.58,377.82 L514.69,377.68 L514.81,377.55 L514.93,377.43 L515.23,377.47 L515.66,377.66 L516.07,377.87 L516.34,377.95 L516.46,377.87 L516.56,377.78 L516.67,377.70 L516.78,377.61 L516.90,377.53 L517.01,377.46 L517.13,377.38 L517.25,377.31 L517.37,377.24 L517.49,377.18 L517.62,377.12 L517.74,377.06 L517.87,377.00 L518.00,376.95 L518.13,376.90 L518.26,376.85 L518.32,376.57 L518.35,376.10 L518.40,375.64 L518.51,375.36 L518.68,375.31 L518.85,375.28 L519.03,375.26 L519.20,375.24 L519.37,375.22 L519.55,375.21 L519.72,375.20 L519.90,375.20Z" fill="none" stroke="#6c707e" stroke-width="1.1" stroke-linejoin="round"/><circle cx="519.9" cy="381.9" r="2.4" fill="none" stroke="#6c707e" stroke-width="1.1"/></svg>
<svg style="left:7px;top:399px" width="12" height="14" viewBox="7 399 12 14"><path d="M10.3,404.6 L10.3,403.2 A2.7,2.7 0 0 1 15.7,403.2 L15.7,404.6" fill="none" stroke="#6c707e" stroke-width="1.2"/><rect x="8.6" y="404.6" width="8.8" height="7" rx="1.6" fill="#fff" stroke="#6c707e" stroke-width="1.2"/><rect x="12.4" y="407" width="1.3" height="2.2" fill="#a8adbd"/></svg>
<svg style="left:22px;top:400px" width="14" height="13" viewBox="22 400 14 13"><rect x="23" y="400" width="12" height="2" fill="#9aa7b0"/><rect x="22" y="403" width="14" height="7" fill="#f4c570"/><rect x="23" y="411" width="12" height="1" fill="#9aa7b0"/><text x="29" y="409" font-family="Liberation Mono" font-weight="bold" font-size="6.8" fill="#3b3a36" text-anchor="middle" letter-spacing="-0.2">DDL</text></svg>
<svg style="left:500px;top:399px" width="12" height="14" viewBox="500 399 12 14"><path d="M503.3,404.6 L503.3,403.2 A2.7,2.7 0 0 1 508.7,403.2 L508.7,404.6" fill="none" stroke="#6c707e" stroke-width="1.2"/><rect x="501.6" y="404.6" width="8.8" height="7" rx="1.6" fill="#fff" stroke="#6c707e" stroke-width="1.2"/><rect x="505.4" y="407" width="1.3" height="2.2" fill="#a8adbd"/></svg>
<svg style="left:515px;top:400px" width="15" height="14" viewBox="515 400 15 14"><rect x="515" y="400" width="12" height="3" fill="#222"/><rect x="515" y="400" width="1.4" height="10" fill="#222"/><rect x="516.4" y="403" width="4" height="7" fill="#e4e4e4"/><ellipse cx="524.5" cy="406.8" rx="4.6" ry="2.1" fill="#1591de"/><path d="M519.9,409.2 Q524.5,411.8 529.1,409.2 M519.9,411.4 Q524.5,414 529.1,411.4" stroke="#1591de" stroke-width="1.4" fill="none"/></svg>
<div class="t" style="left:41.10px;top:398.82px;letter-spacing:-0.313px">Database1</div>
<div class="t" style="left:534.50px;top:398.82px;letter-spacing:-0.138px">Database2</div>
<div class="a" style="left:1px;top:417px;width:10px;height:123px;background:#dfdfdf"></div>
<div class="a" style="left:1px;top:540px;width:10px;height:109px;background:#fff"></div>
<div class="a" style="left:11px;top:417px;width:8px;height:232px;background:#fff"></div>
<div class="a" style="left:19px;top:417px;width:831px;height:232px;background:#bee6be"></div>
<div class="a" style="left:19px;top:639px;width:295px;height:10px;background:#aed2ab"></div>
<svg style="left:0px;top:0px" width="851" height="687" viewBox="0 0 851 687"><path d="M493.5,419 C491.5,423 490.5,432 490,440 L476,649 L850,649 L850,419 Z" fill="#fff"/></svg>
<div class="a" style="left:436px;top:417px;width:1px;height:232px;background:#e4e6eb"></div>
<div class="a" style="left:525px;top:417px;width:1px;height:232px;background:#ebecf0"></div>
<div class="a" style="left:493px;top:417px;width:357px;height:2px;background:#bee6be"></div>
<div class="code" style="left:19.5px;top:419px"><span class="k">CREATE TABLE</span> [dbo].[Categories] (
    [CategoryID]   <span class="k">INT</span>           <span class="k">IDENTITY</span> (<span class="n">1</span>, <span class="n">1</span>) <span class="k">NOT</span>
    [CategoryName] <span class="k">NVARCHAR</span> (<span class="n">15</span>) <span class="k">NOT NULL</span>,
    [Description]  <span class="k">NTEXT</span>         <span class="k">NULL</span>,
    [Picture]      <span class="k">IMAGE</span>         <span class="k">NULL</span>,
    <span class="k">CONSTRAINT</span> [PK_Categories] <span class="k">PRIMARY KEY CLUSTERED</span>
);
<span class="k">GO</span>

<span class="k">CREATE NONCLUSTERED INDEX</span> [CategoryName]
    <span class="k">ON</span> [dbo].[Categories]([CategoryName] <span class="k">ASC</span>);</div>
<div class="ln" style="left:450.7px;top:419px"><span style="color:#6c707e">1</span>
2
3
4
5
6
7
8
9
10
11</div>
<div class="ln" style="left:503.2px;top:419px;color:#6c707e">1</div>
<div class="a" style="left:1px;top:649px;width:849px;height:37px;background:#f7f8fa"></div>
<div class="t" style="left:11.65px;top:659.82px;letter-spacing:0.006px">Comparison</div>
<div class="t" style="left:89.30px;top:659.82px;letter-spacing:0.275px">complete.</div>
<div class="t" style="left:155.10px;top:659.82px;letter-spacing:0.510px">Differences</div>
<div class="t" style="left:232.80px;top:659.82px;letter-spacing:0.487px">detected.</div>
<div class="t" style="left:297.30px;top:659.82px;letter-spacing:0.080px">Errors</div>
<div class="t" style="left:339.30px;top:659.82px;letter-spacing:-0.300px">in</div>
<div class="t" style="left:354.50px;top:659.82px;letter-spacing:0.600px">the</div>
<div class="t" style="left:379.50px;top:659.82px;letter-spacing:0.450px">project</div>
<div class="t" style="left:427.80px;top:659.82px;letter-spacing:-0.300px">may</div>
<div class="t" style="left:457.00px;top:659.82px;letter-spacing:0.540px">result</div>
<div class="t" style="left:497.30px;top:659.82px;letter-spacing:-0.300px">in</div>
<div class="t" style="left:511.70px;top:659.82px;letter-spacing:0.600px">an</div>
<div class="t" style="left:532.80px;top:659.82px;letter-spacing:0.022px">incomplete</div>
<div class="t" style="left:603.60px;top:659.82px;letter-spacing:-0.200px">or</div>
<div class="t" style="left:621.00px;top:659.82px;letter-spacing:0.100px">inaccurate</div>
<div class="t" style="left:689.50px;top:659.82px;letter-spacing:0.150px">comparison.</div>
<div class="t" style="left:769.60px;top:659.82px;letter-spacing:-0.300px">See</div>
<div class="t" style="left:798.10px;top:659.82px;letter-spacing:-0.100px">Problems</div>
</body></html>
